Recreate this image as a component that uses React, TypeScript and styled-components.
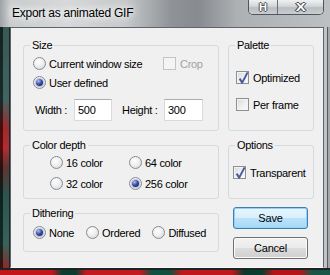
import styled, { createGlobalStyle } from 'styled-components';

const GlobalStyle = createGlobalStyle`
  html, body {
    margin: 0;
    padding: 0;
    background: #111;
  }
  body {
    font-family: "Liberation Sans", Arial, sans-serif;
    font-size: 11px;
    color: #000;
  }
`;

const Desktop = styled.div`
  width: 330px;
  height: 275px;
  overflow: hidden;
  background: linear-gradient(to right, #c3161b 0 52px, #0e3b30 62px 76px, #c21a1e 86px 140px, #12503f 152px 170px, #bf171c 182px 232px, #0d3a2e 244px 262px, #b51519 274px 300px, #1a5646 312px);
`;

const Window = styled.div`
  height: 270px;
  box-sizing: border-box;
  display: flex;
  flex-direction: column;
  border-bottom: 2px solid #1c2323;
`;

const TitleBar = styled.div`
  height: 27px;
  flex: none;
  display: flex;
  justify-content: space-between;
  align-items: flex-start;
  background: linear-gradient(to right, #9ea3a7 0, #c9cccd 3%, #d6d8d9 20%, #c6c8c9 38%, #8f9397 52%, #878b8f 60%, #adb1b4 72%, #bdc0c2 100%);
`;

const Title = styled.div`
  padding-left: 12px;
  line-height: 27px;
  font-size: 12px;
  letter-spacing: -0.25px;
  color: #000;
  text-shadow: 0 0 6px #fff, 0 0 10px #fff, 0 0 14px rgba(255, 255, 255, 0.8);
`;

const CaptionGroup = styled.div`
  margin-right: 6px;
  height: 15px;
  box-sizing: border-box;
  display: flex;
  border: 1px solid #50565c;
  border-top: none;
  border-radius: 0 0 5px 5px;
  overflow: hidden;
  box-shadow: inset 0 -1px 0 rgba(255, 255, 255, 0.6);
`;

const CaptionButton = styled.div<{ $w: number; $size: number }>`
  width: ${({ $w }) => $w}px;
  display: flex;
  align-items: center;
  justify-content: center;
  background: linear-gradient(#eef0f1 0%, #d3d6d9 45%, #b9bec2 55%, #c9cdd0 100%);
  color: #fff;
  font-weight: bold;
  font-size: ${({ $size }) => $size}px;
  line-height: 14px;
  text-shadow: -1px 0 #4a4f54, 1px 0 #4a4f54, 0 -1px #4a4f54, 0 1px #4a4f54;
  & + & {
    border-left: 1px solid #6a7075;
  }
`;

const CloseGlyph = styled.span`
  display: inline-block;
  transform: scaleX(1.35);
`;

const Body = styled.div`
  flex: 1;
  display: flex;
  min-height: 0;
`;

const LeftFrame = styled.div`
  width: 10px;
  flex: none;
  background:
    linear-gradient(to right, rgba(0, 0, 0, 0.55) 0 3px, rgba(120, 150, 150, 0.15) 3px 9px, #1e2326 9px),
    linear-gradient(#2c4d48 0%, #365d57 30%, #a3171b 42%, #c01a1e 50%, #5a2420 58%, #1f4a42 70%, #2a5a50 90%, #8a1a1a 100%);
`;

const RightFrame = styled.div`
  width: 6px;
  flex: none;
  background: linear-gradient(to right, #c0c3c6 0 3px, #565b60 3px 4px, #a4a8ab 4px);
`;

const Client = styled.div`
  width: 314px;
  box-sizing: border-box;
  background: #f0f0f0;
  border: 1px solid #5d656c;
  border-bottom-color: #f8f8f8;
`;

const Layout = styled.div`
  display: grid;
  grid-template-columns: 196px 86px;
  grid-template-rows: 92px 60px 52px;
  column-gap: 9px;
  row-gap: 8px;
  padding: 11px 0 0 12px;
`;

const Group = styled.fieldset<{ $h: number }>`
  margin: 0;
  padding: 0;
  min-width: 0;
  height: ${({ $h }) => $h}px;
  box-sizing: border-box;
  align-self: start;
  border: 1px solid #d3dbe0;
  border-radius: 3px;
`;

const Legend = styled.legend`
  margin-left: 6px;
  padding: 0 2px;
  line-height: 13px;
  font-size: 11px;
  letter-spacing: -0.3px;
`;

const SizeGrid = styled.div`
  display: grid;
  grid-template-columns: 130px auto;
  grid-auto-rows: 19px;
  padding: 2px 0 0 9px;
`;

const Option = styled.label<{ $disabled?: boolean }>`
  display: flex;
  align-items: center;
  gap: 3px;
  white-space: nowrap;
  letter-spacing: -0.3px;
  color: ${({ $disabled }) => ($disabled ? '#a2a2a2' : '#000')};
`;

const CheckOption = styled(Option)`
  gap: 4px;
`;

const RadioDot = styled.span<{ $on?: boolean }>`
  width: 13px;
  height: 13px;
  box-sizing: border-box;
  border-radius: 50%;
  border: 1px solid #8a8c90;
  background: radial-gradient(circle at 40% 35%, #ffffff 0%, #f0f1f2 40%, #d0d4d8 100%);
  display: flex;
  align-items: center;
  justify-content: center;
  flex: none;

  &::after {
    content: '';
    width: 7px;
    height: 7px;
    border-radius: 50%;
    background: radial-gradient(circle at 35% 30%, #b4c2f0 0%, #3b4ea6 45%, #0c1556 100%);
    box-shadow: 0 0 0 1px rgba(120, 140, 200, 0.45);
    display: ${({ $on }) => ($on ? 'block' : 'none')};
  }
`;

const CheckBox = styled.span<{ $disabled?: boolean }>`
  width: 13px;
  height: 13px;
  box-sizing: border-box;
  flex: none;
  position: relative;
  border: 1px solid ${({ $disabled }) => ($disabled ? '#c4c4c4' : '#8e8f8f')};
  background: ${({ $disabled }) =>
    $disabled ? '#f4f4f4' : 'linear-gradient(135deg, #d6d8db 0%, #eceef0 50%, #fbfbfb 100%)'};
  box-shadow: inset 0 0 0 1px #f4f4f4;

  svg {
    position: absolute;
    left: 0;
    top: -2px;
  }
`;

const DimRow = styled.div`
  grid-column: 1 / span 2;
  margin: 7px 0 0 2px;
  height: 22px;
  display: flex;
  align-items: center;
  letter-spacing: -0.3px;
`;

const DimLabel = styled.span<{ $w: number; $ml?: number }>`
  width: ${({ $w }) => $w}px;
  margin-left: ${({ $ml }) => $ml ?? 0}px;
`;

const TextBox = styled.div<{ $w: number }>`
  width: ${({ $w }) => $w}px;
  height: 22px;
  box-sizing: border-box;
  padding-left: 3px;
  display: flex;
  align-items: center;
  background: #fff;
  border: 1px solid #d6dbe1;
  border-top-color: #abadb3;
  letter-spacing: -0.3px;
`;

const Stack = styled.div<{ $pt: number; $pl: number; $row: number }>`
  display: grid;
  grid-auto-rows: ${({ $row }) => $row}px;
  padding: ${({ $pt, $pl }) => `${$pt}px 0 0 ${$pl}px`};
`;

const DepthGrid = styled.div`
  display: grid;
  grid-template-columns: 79px 79px;
  grid-auto-rows: 21px;
  padding-left: 26px;
`;

const DitherRow = styled.div`
  display: flex;
  align-items: center;
  gap: 12px;
  height: 19px;
  padding: 3px 0 0 9px;
`;

const ButtonColumn = styled.div`
  display: flex;
  flex-direction: column;
  gap: 8px;
  padding-left: 5px;
`;

const PushButton = styled.button<{ $default?: boolean }>`
  width: 75px;
  height: 22px;
  margin: 0;
  padding: 0;
  font: 11px "Liberation Sans", Arial, sans-serif;
  letter-spacing: -0.2px;
  color: #000;
  border-radius: 3px;
  border: 1px solid ${({ $default }) => ($default ? '#3c7fb1' : '#707070')};
  background: ${({ $default }) =>
    $default
      ? 'linear-gradient(#e7f5fd 0%, #d7effc 50%, #bbe3fa 50%, #a8d8f6 100%)'
      : 'linear-gradient(#f2f2f2 0%, #ebebeb 50%, #dddddd 50%, #cfcfcf 100%)'};
  box-shadow: inset 0 0 0 1px ${({ $default }) => ($default ? '#93d1f6' : '#fbfbfb')};
`;

function Radio({ label, on }: { label: string; on?: boolean }) {
  return (
    <Option>
      <RadioDot $on={on} />
      <span>{label}</span>
    </Option>
  );
}

function Check({ label, on, disabled }: { label: string; on?: boolean; disabled?: boolean }) {
  return (
    <CheckOption $disabled={disabled}>
      <CheckBox $disabled={disabled}>
        {on && (
          <svg width="13" height="15" viewBox="0 0 13 15">
            <path d="M2.6 8.6 L5.2 12.6 L10.6 2.4" fill="none" stroke="#4a5c9e" strokeWidth="2" strokeLinejoin="round" />
          </svg>
        )}
      </CheckBox>
      <span>{label}</span>
    </CheckOption>
  );
}

export default function App() {
  return (
    <>
      <GlobalStyle />
      <Desktop>
        <Window>
          <TitleBar>
            <Title>Export as animated GIF</Title>
            <CaptionGroup>
              <CaptionButton $w={28} $size={11}>H</CaptionButton>
              <CaptionButton $w={45} $size={11}><CloseGlyph>X</CloseGlyph></CaptionButton>
            </CaptionGroup>
          </TitleBar>
          <Body>
            <LeftFrame />
            <Client>
              <Layout>
                <Group $h={92}>
                  <Legend>Size</Legend>
                  <SizeGrid>
                    <Radio label="Current window size" />
                    <Check label="Crop" disabled />
                    <Radio label="User defined" on />
                    <span />
                    <DimRow>
                      <DimLabel $w={39}>Width :</DimLabel>
                      <TextBox $w={38}>500</TextBox>
                      <DimLabel $w={42} $ml={10}>Height :</DimLabel>
                      <TextBox $w={39}>300</TextBox>
                    </DimRow>
                  </SizeGrid>
                </Group>

                <Group $h={92}>
                  <Legend>Palette</Legend>
                  <Stack $pt={12} $pl={7} $row={27}>
                    <Check label="Optimized" on />
                    <Check label="Per frame" />
                  </Stack>
                </Group>

                <Group $h={60}>
                  <Legend>Color depth</Legend>
                  <DepthGrid>
                    <Radio label="16 color" />
                    <Radio label="64 color" />
                    <Radio label="32 color" />
                    <Radio label="256 color" on />
                  </DepthGrid>
                </Group>

                <Group $h={60}>
                  <Legend>Options</Legend>
                  <Stack $pt={14} $pl={4} $row={13}>
                    <Check label="Transparent" on />
                  </Stack>
                </Group>

                <Group $h={45}>
                  <Legend>Dithering</Legend>
                  <DitherRow>
                    <Radio label="None" on />
                    <Radio label="Ordered" />
                    <Radio label="Diffused" />
                  </DitherRow>
                </Group>

                <ButtonColumn>
                  <PushButton $default>Save</PushButton>
                  <PushButton>Cancel</PushButton>
                </ButtonColumn>
              </Layout>
            </Client>
            <RightFrame />
          </Body>
        </Window>
      </Desktop>
    </>
  );
}
